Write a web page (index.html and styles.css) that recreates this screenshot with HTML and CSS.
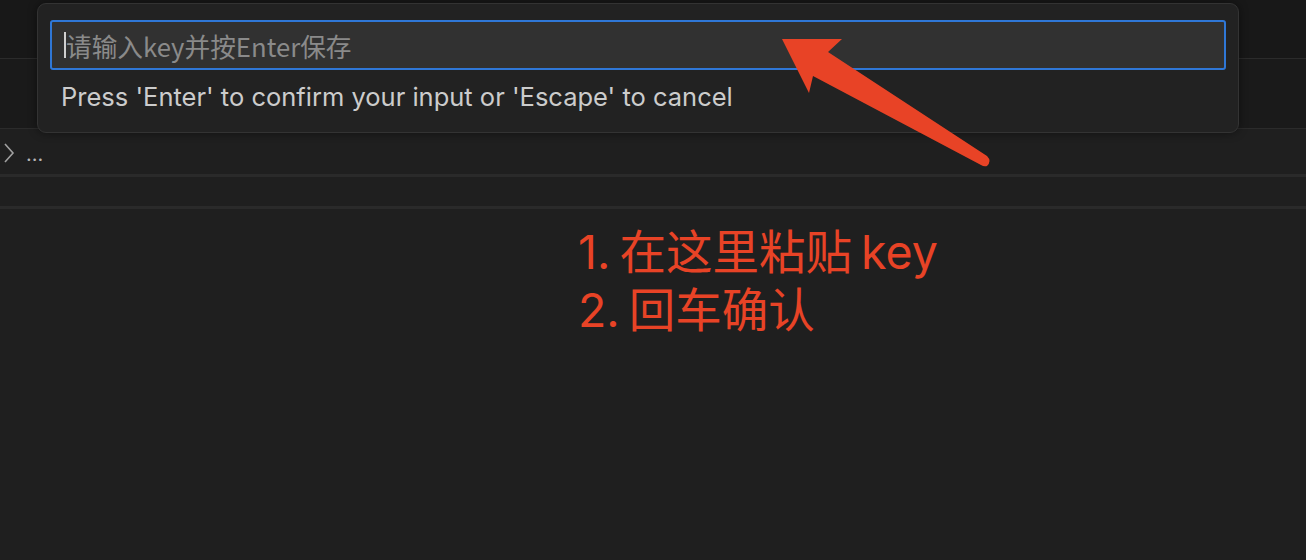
FILE: index.html
```html
<!DOCTYPE html>
<html>
<head>
<meta charset="utf-8">
<link rel="stylesheet" href="styles.css">
</head>
<body>
<div class="app">
  <div class="bar bar-top"></div>
  <div class="bar bar-tabs"></div>
  <div class="crumbs">
    <svg class="chev" width="14" height="22" viewBox="0 0 14 22"><path d="M3 2 L11 11 L3 20" fill="none" stroke="#a0a0a0" stroke-width="1.6"/></svg>
    <span class="dots">...</span>
  </div>
  <div class="sep"></div>
  <div class="row2"></div>
  <div class="sep"></div>
  <div class="rest"></div>

  <div class="quick">
    <div class="inputbox">
      <span class="caret"></span>
      <span class="ph">请输入key并按Enter保存</span>
    </div>
    <div class="hint">Press 'Enter' to confirm your input or 'Escape' to cancel</div>
  </div>

  <svg class="arrow" width="1306" height="560" viewBox="0 0 1306 560">
    <path d="M782 39 L842 39 L828 52 L987 156 Q992 161 987 166 Q984 167 981 165 L813 76 L809 93 Z" fill="#e84326"/>
  </svg>

  <div class="note">
    <div>1. 在这里粘贴 key</div>
    <div>2. 回车确认</div>
  </div>
</div>
</body>
</html>
```
FILE: styles.css
```css
html, body {
  margin: 0;
  padding: 0;
  background: #1f1f1f;
  width: 1306px;
  height: 560px;
  overflow: hidden;
}
.app {
  position: relative;
  width: 1306px;
  height: 560px;
  display: flex;
  flex-direction: column;
  font-family: Inter, "Noto Sans CJK SC", sans-serif;
}
.bar {
  background: #181818;
  border-bottom: 1px solid #2b2b2b;
}
.bar-top { height: 58px; }
.bar-tabs { height: 69px; background: #1a1a1a; }
.crumbs {
  height: 45px;
  display: flex;
  align-items: center;
  padding-left: 2px;
  gap: 10px;
  color: #b5b5b5;
}
.chev { margin-top: 2px; }
.dots {
  font-size: 20px;
  margin-top: 4px;
}
.sep {
  height: 3px;
  background: #2a2a2a;
}
.row2 { height: 29px; }
.rest { flex: 1; }

.quick {
  position: absolute;
  left: 37px;
  top: 3px;
  width: 1202px;
  height: 130px;
  background: #222222;
  border: 1px solid #333333;
  border-radius: 9px;
  box-shadow: 0 0 10px rgba(0,0,0,0.45);
  box-sizing: border-box;
  padding: 16px 12px 0 12px;
}
.inputbox {
  height: 50px;
  box-sizing: border-box;
  border: 2px solid #2f77d6;
  border-radius: 3px;
  background: #313131;
  display: flex;
  align-items: center;
  padding-left: 12px;
}
.caret {
  width: 2px;
  height: 26px;
  background: #cfcfcf;
  margin-right: 0;
}
.ph {
  font-family: "Noto Sans CJK SC", sans-serif;
  font-size: 25.7px;
  color: #8a8a8a;
}
.hint {
  margin-top: 11px;
  padding-left: 11px;
  font-size: 25.5px;
  color: #cccccc;
  line-height: 32px;
}
.arrow {
  position: absolute;
  left: 0;
  top: 0;
}
.note {
  position: absolute;
  left: 578px;
  top: 223px;
  color: #e84326;
  font-size: 46.5px;
  line-height: 58px;
  word-spacing: -4px;
  font-family: Inter, "Noto Sans CJK SC", sans-serif;
}
```
